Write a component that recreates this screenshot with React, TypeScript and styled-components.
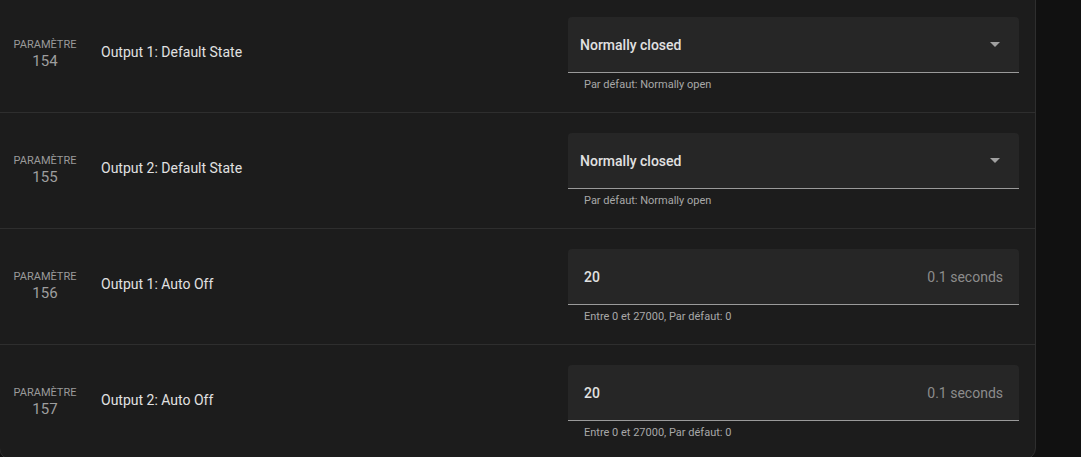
import React from 'react'
import styled, { createGlobalStyle } from 'styled-components'

const GlobalStyle = createGlobalStyle`
  html, body {
    margin: 0;
    padding: 0;
    background: #111111;
    font-family: Roboto, 'Noto Sans', sans-serif;
    overflow: hidden;
  }
`

const Card = styled.div`
  box-sizing: border-box;
  width: 1037px;
  margin: -4px 0 0 -1px;
  background: #1c1c1c;
  border: 1px solid #2e2e2e;
  border-radius: 0 0 12px 12px;
`

const Row = styled.div`
  display: flex;
  align-items: center;
  height: 116px;
  box-sizing: border-box;
  padding: 20px 16px 20px 0;
  border-bottom: 1px solid #2e2e2e;

  &:last-child {
    border-bottom: none;
    height: 114px;
    padding-bottom: 19px;
  }
`

const Param = styled.div`
  width: 90px;
  flex: none;
  text-align: center;
  margin-bottom: 1px;
`

const ParamLabel = styled.div`
  font-size: 11px;
  line-height: 14px;
  color: #9a9a9a;
  text-transform: uppercase;
`

const ParamNumber = styled.div`
  font-size: 15px;
  line-height: 18px;
  color: #9e9e9e;
`

const Title = styled.div`
  flex: 1;
  margin: 0 0 5px 11px;
  font-size: 14px;
  color: #e1e1e1;
`

const FieldWrap = styled.div`
  width: 451px;
  flex: none;
`

const Field = styled.div<{ $inset: number }>`
  box-sizing: border-box;
  height: 56px;
  display: flex;
  align-items: center;
  padding: 0 16px 0 ${p => p.$inset}px;
  background: #262626;
  border-radius: 4px 4px 0 0;
  border-bottom: 1px solid #9a9a9a;
`

const Value = styled.div`
  flex: 1;
  font-size: 14px;
  font-weight: 500;
  color: #e1e1e1;
`

const Suffix = styled.div`
  font-size: 14px;
  color: #8c8c8c;
`

const Arrow = styled.div`
  width: 0;
  height: 0;
  margin-right: 3px;
  border-left: 5px solid transparent;
  border-right: 5px solid transparent;
  border-top: 5px solid #a0a0a0;
`

const Helper = styled.div`
  padding: 5px 0 0 16px;
  font-size: 11px;
  line-height: 14px;
  color: #a8a8a8;
`

type Item = {
  num: number
  title: string
  value: string
  suffix?: string
  helper: string
}

const items: Item[] = [
  { num: 154, title: 'Output 1: Default State', value: 'Normally closed', helper: 'Par défaut: Normally open' },
  { num: 155, title: 'Output 2: Default State', value: 'Normally closed', helper: 'Par défaut: Normally open' },
  { num: 156, title: 'Output 1: Auto Off', value: '20', suffix: '0.1 seconds', helper: 'Entre 0 et 27000, Par défaut: 0' },
  { num: 157, title: 'Output 2: Auto Off', value: '20', suffix: '0.1 seconds', helper: 'Entre 0 et 27000, Par défaut: 0' },
]

export default function App() {
  return (
    <>
      <GlobalStyle />
      <Card>
        {items.map(item => (
          <Row key={item.num}>
            <Param>
              <ParamLabel>Paramètre</ParamLabel>
              <ParamNumber>{item.num}</ParamNumber>
            </Param>
            <Title>{item.title}</Title>
            <FieldWrap>
              <Field $inset={item.suffix ? 16 : 12}>
                <Value>{item.value}</Value>
                {item.suffix ? <Suffix>{item.suffix}</Suffix> : <Arrow />}
              </Field>
              <Helper>{item.helper}</Helper>
            </FieldWrap>
          </Row>
        ))}
      </Card>
    </>
  )
}
